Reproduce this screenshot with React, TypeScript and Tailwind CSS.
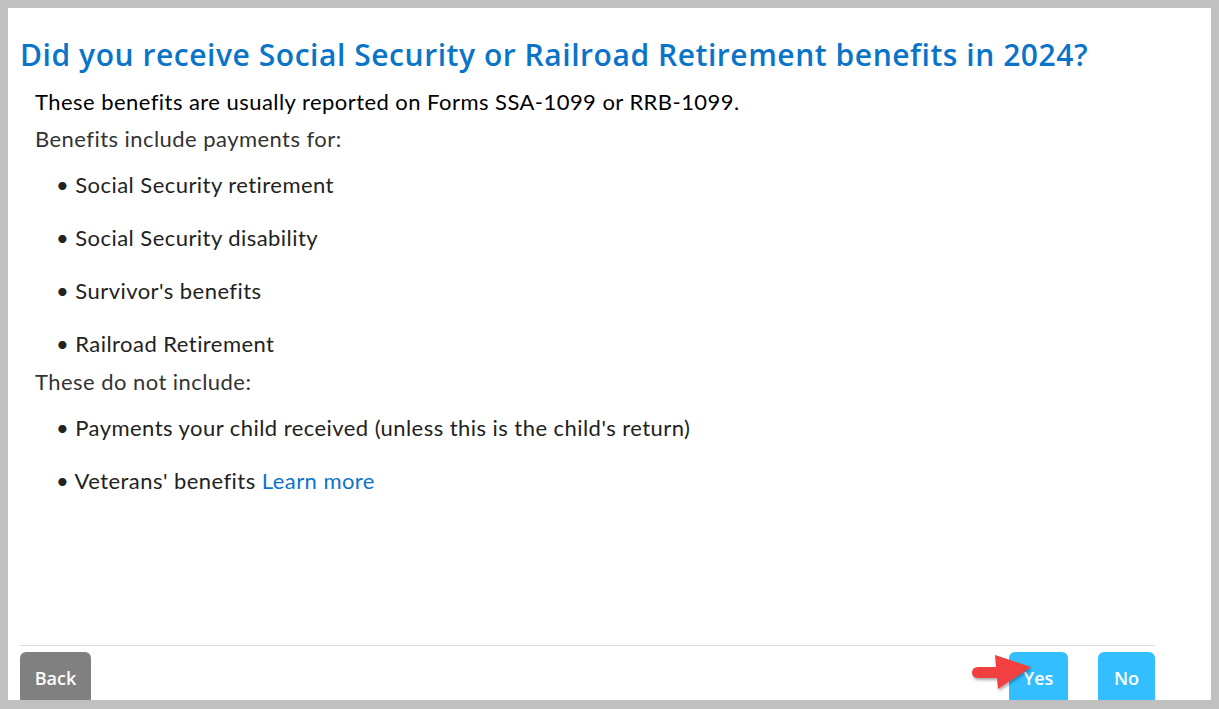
export default function App() {
  const body = { fontFamily: "Lato, 'Open Sans', sans-serif" };
  const head = { fontFamily: "'Open Sans', Lato, sans-serif" };
  return (
    <div className="h-[709px] w-full bg-[#c0c0c0] pt-[8px] pl-[8px] pr-[8px] pb-[9px]" style={body}>
      <div className="flex h-full flex-col overflow-hidden bg-white">
        <div className="flex-1">
          <h1
            className="mt-[27px] pl-[12px] text-[30px] font-semibold leading-[40px] tracking-[0.55px] text-[#0a74c8]"
            style={head}
          >
            Did you receive Social Security or Railroad Retirement benefits in 2024?
          </h1>
          <div className="mt-[8px] pl-[27px] text-[22px] tracking-[0.45px]">
            <p className="leading-[37px] text-black">
              These benefits are usually reported on Forms SSA-1099 or RRB-1099.
            </p>
            <p className="leading-[37px] text-[#333]">Benefits include payments for:</p>
            <ul className="flex flex-col gap-[30px] pl-[21px] pt-[16px] pb-[8px] text-[#222]">
              <li className="leading-[23px]">• Social Security retirement</li>
              <li className="leading-[23px]">• Social Security disability</li>
              <li className="leading-[23px]">• Survivor's benefits</li>
              <li className="leading-[23px]">• Railroad Retirement</li>
            </ul>
            <p className="leading-[37px] text-[#333]">These do not include:</p>
            <ul className="flex flex-col gap-[30px] pl-[21px] pt-[16px] text-[#222]">
              <li className="leading-[23px]">
                • Payments your child received (unless this is the child's return)
              </li>
              <li className="leading-[23px]">
                • Veterans' benefits <a className="text-[#0a74c8]">Learn more</a>
              </li>
            </ul>
          </div>
        </div>
        <div className="ml-[12px] mr-[56px] h-[55px] border-t border-[#d5dfdf] pt-[6px]" style={head}>
          <div className="flex items-start justify-between">
            <button className="h-[52px] w-[71px] rounded-[6px] bg-[#808080] text-[18px] font-semibold text-white">
              Back
            </button>
            <div className="flex gap-[30px]">
              <div className="relative">
                <button className="h-[52px] w-[59px] rounded-[6px] bg-[#33bfff] text-[18px] font-semibold text-white">
                  Yes
                </button>
                <svg
                  className="absolute left-[-41px] top-[2px]"
                  width="70"
                  height="42"
                  viewBox="0 0 70 42"
                >
                  <defs>
                    <filter id="sh" x="-20%" y="-20%" width="150%" height="160%">
                      <feDropShadow dx="1" dy="2" stdDeviation="1.5" floodColor="#000" floodOpacity="0.35" />
                    </filter>
                  </defs>
                  <g filter="url(#sh)" fill="#f24141">
                    <rect x="4" y="13" width="30" height="11" rx="5.5" />
                    <polygon points="27,1 63,13 30,35" />
                  </g>
                </svg>
              </div>
              <button className="h-[52px] w-[57px] rounded-[6px] bg-[#33bfff] text-[18px] font-semibold text-white">
                No
              </button>
            </div>
          </div>
        </div>
      </div>
    </div>
  );
}
